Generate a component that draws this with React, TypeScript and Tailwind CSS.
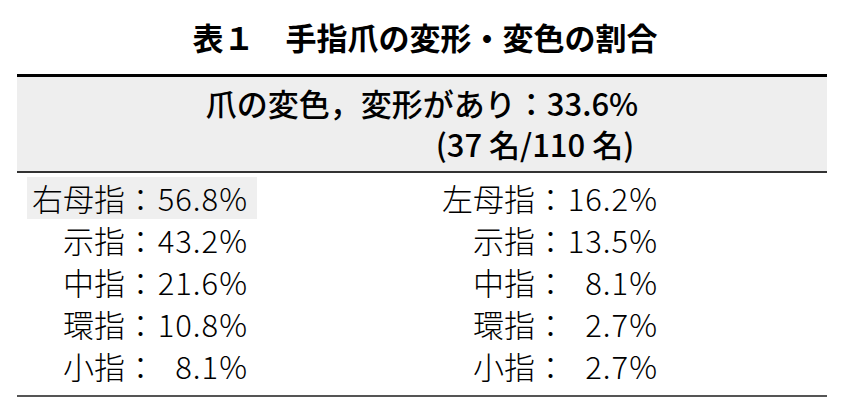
const rows: [string, string, string, string][] = [
  ['右母指', '56.8%', '左母指', '16.2%'],
  ['示指', '43.2%', '示指', '13.5%'],
  ['中指', '21.6%', '中指', '8.1%'],
  ['環指', '10.8%', '環指', '2.7%'],
  ['小指', '8.1%', '小指', '2.7%'],
];

function Cell({ label, value, highlight }: { label: string; value: string; highlight?: boolean }) {
  return (
    <div className={`flex items-center h-[42px] pl-[5px] pr-[9px] ${highlight ? 'bg-[#efefef]' : ''}`}>
      <span className="w-[93px] text-right whitespace-nowrap">{label}</span>
      <span className="w-[31px] text-center">：</span>
      <span className="w-[92px] text-right tabular-nums tracking-[1px]">{value}</span>
    </div>
  );
}

export default function App() {
  return (
    <div className="w-[844px] h-[418px] bg-white text-black font-['Noto_Sans_CJK_JP','Noto_Sans',sans-serif]">
      <h1 className="pt-[21px] pl-[6px] text-center text-[31px] leading-[31px] font-bold whitespace-nowrap">
        表１　手指爪の変形・変色の割合
      </h1>

      <div className="mx-[17px] mt-[22px] border-t-[3px] border-black">
        <div className="h-[96px] bg-[#eeeeee] border-b-2 border-[#333] flex justify-center pt-[5px]">
          <div className="text-[31px] leading-[41px] font-medium">
            <div className="whitespace-nowrap">爪の変色，変形があり：33.6%</div>
            <div className="text-right pr-[4px] whitespace-nowrap">(37 名/110 名)</div>
          </div>
        </div>

        <div className="grid grid-cols-[420px_1fr] pt-[4px] pb-[8px] border-b-2 border-[#555] text-[31px] leading-[42px] font-light">
          {rows.map(([l1, v1, l2, v2], i) => (
            <div key={i} className="contents">
              <div className="flex pl-[10px]">
                <Cell label={l1} value={v1} highlight={i === 0} />
              </div>
              <div className="flex">
                <Cell label={l2} value={v2} />
              </div>
            </div>
          ))}
        </div>
      </div>
    </div>
  );
}
